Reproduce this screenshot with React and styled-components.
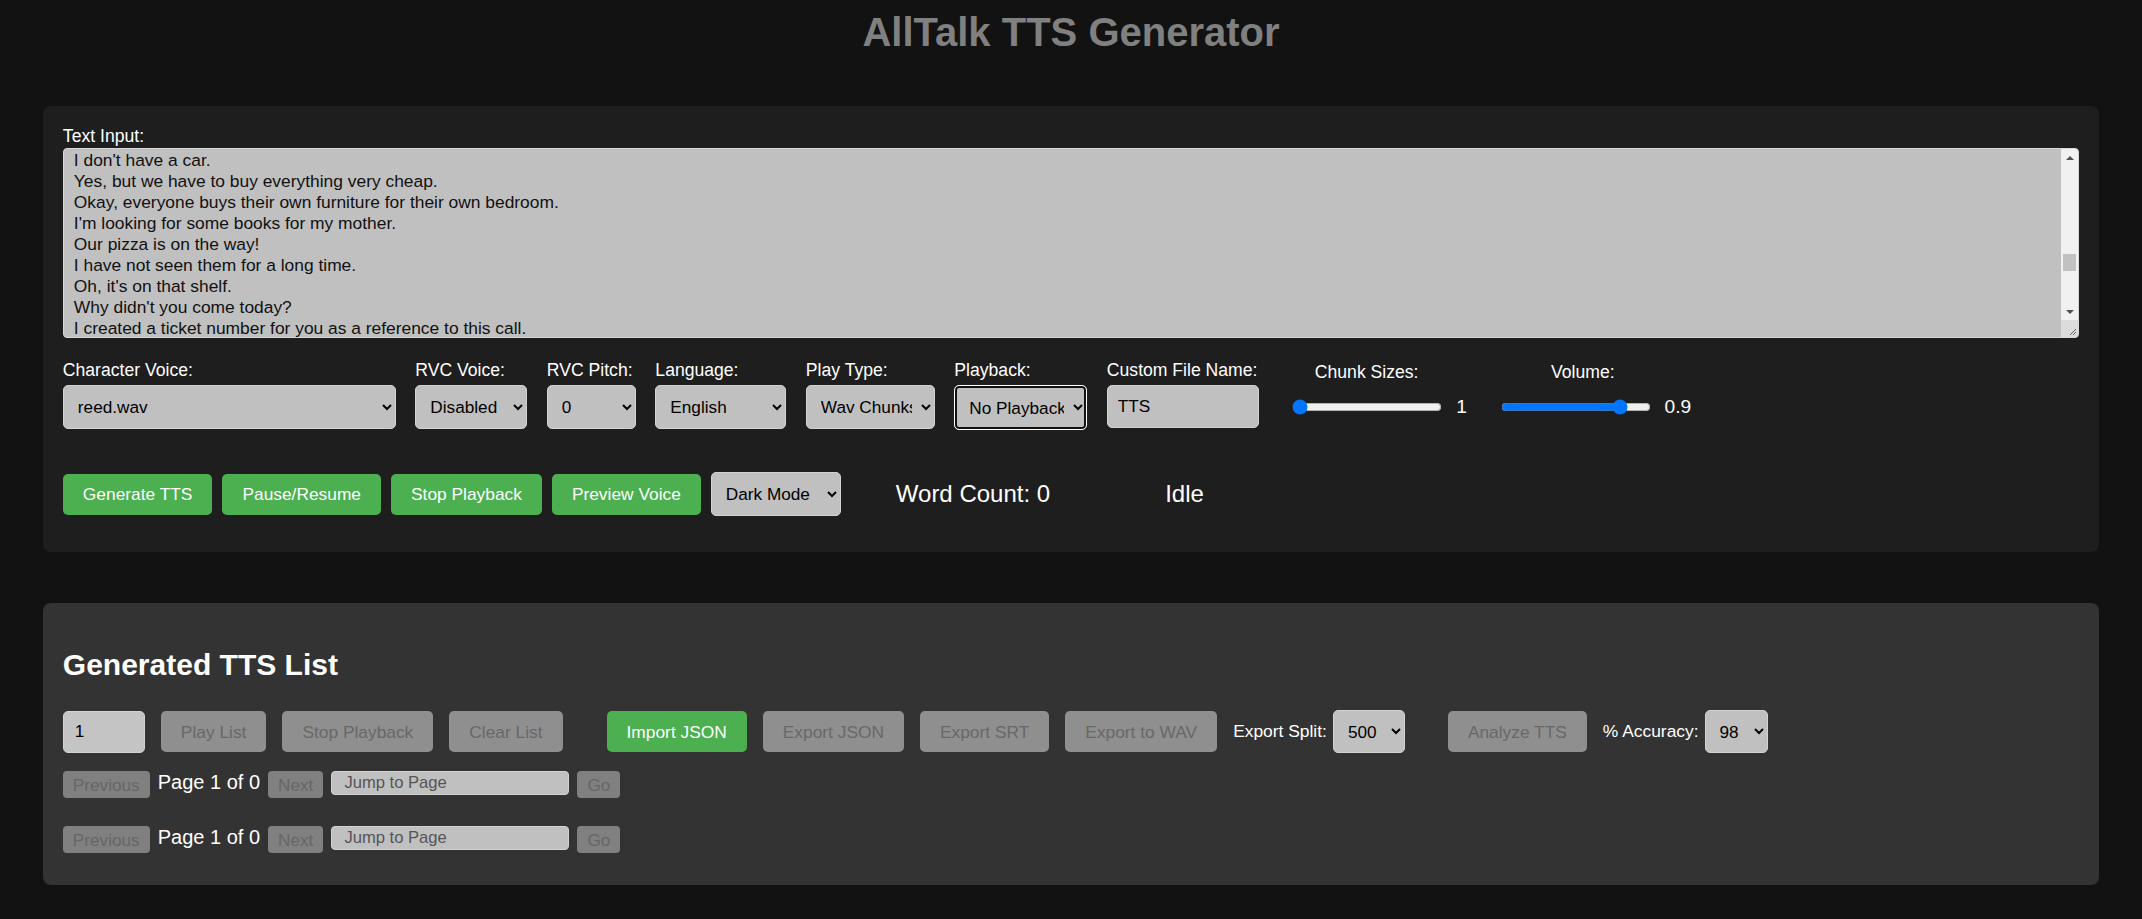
import styled, { createGlobalStyle, css } from "styled-components";

const GlobalStyle = createGlobalStyle`
  body {
    margin: 0;
    background-color: #121212;
    color: #fff;
    font-family: "Liberation Sans", Arial, sans-serif;
  }
`;

const Title = styled.h1`
  margin: 9px 0 51px;
  text-align: center;
  font-size: 40px;
  line-height: 46px;
  color: #808080;
`;

const Panel = styled.section`
  width: 96%;
  margin: 0 auto ${(p) => p.$gap || 0}px;
  box-sizing: border-box;
  padding: 20px 20px ${(p) => p.$padBottom}px;
  border-radius: 8px;
  background-color: ${(p) => p.$bg};
`;

const Label = styled.label`
  display: block;
  font-size: 17.6px;
  line-height: 20px;
  margin-bottom: ${(p) => p.$mb || 0}px;
  margin-top: ${(p) => p.$mt || 0}px;
  text-align: ${(p) => (p.$center ? "center" : "left")};
  padding-right: ${(p) => (p.$center ? 12 : 0)}px;
  white-space: nowrap;
`;

const TextAreaWrap = styled.div`
  position: relative;
  height: 190px;
`;

const TextArea = styled.textarea`
  display: block;
  width: 100%;
  height: 100%;
  box-sizing: border-box;
  padding: 1px 30px 0 10px;
  font-family: inherit;
  font-size: 17.4px;
  line-height: 21px;
  color: #111;
  background-color: #c0c0c0;
  border: 1px solid #d8d8d8;
  border-radius: 4px;
  resize: none;
  overflow: hidden;
  outline: none;
`;

const ScrollTrack = styled.div`
  position: absolute;
  top: 1px;
  right: 1px;
  bottom: 18px;
  width: 17px;
  background-color: #f1f1f1;
  display: flex;
  flex-direction: column;
  justify-content: space-between;
  align-items: center;
  border-top-right-radius: 3px;
`;

const ArrowBox = styled.div`
  width: 17px;
  height: 17px;
  display: flex;
  align-items: center;
  justify-content: center;
`;

const Arrow = styled.span`
  width: 0;
  height: 0;
  border-left: 4px solid transparent;
  border-right: 4px solid transparent;
  ${(p) =>
    p.$down
      ? css`border-top: 4px solid #505050;`
      : css`border-bottom: 4px solid #505050;`}
`;

const Thumb = styled.div`
  position: absolute;
  top: 105px;
  left: 2px;
  width: 13px;
  height: 17px;
  background-color: #c1c1c1;
`;

const Resizer = styled.div`
  position: absolute;
  right: 1px;
  bottom: 1px;
  width: 17px;
  height: 17px;
  background-color: #dcdcdc;
  border-bottom-right-radius: 3px;
`;

const ControlsRow = styled.div`
  display: flex;
  align-items: flex-start;
  gap: 19.5px;
  margin-top: 22px;
`;

const Field = styled.div`
  display: flex;
  flex-direction: column;
`;

const SliderField = styled.div`
  display: flex;
  flex-direction: column;
`;

const SliderRow = styled.div`
  display: flex;
  align-items: center;
  height: 44px;
  margin-top: 3px;
`;

const Range = styled.input`
  width: 150px;
  margin: 0 2px 0 14px;
`;

const RangeValue = styled.span`
  margin-left: 12px;
  font-size: 19.2px;
`;

const Select = styled.select`
  width: ${(p) => p.$w}px;
  height: ${(p) => p.$h || 44}px;
  box-sizing: border-box;
  padding: 0 6px 0 10px;
  font-family: inherit;
  font-size: ${(p) => p.$fs || 17.2}px;
  color: #000;
  background-color: #c0c0c0;
  border: 1px solid #d2d2d2;
  border-radius: 5px;
  outline: none;
  ${(p) =>
    p.$focused &&
    css`
      border: 1px solid #fff;
      box-shadow: inset 0 0 0 2px #111;
    `}
`;

const TextInput = styled.input`
  width: ${(p) => p.$w}px;
  height: ${(p) => p.$h}px;
  box-sizing: border-box;
  padding: 0 ${(p) => p.$px || 10}px;
  font-family: inherit;
  font-size: ${(p) => p.$fs || 17.2}px;
  color: #000;
  background-color: ${(p) => p.$bg || "#c0c0c0"};
  border: 1px solid #d2d2d2;
  border-radius: ${(p) => p.$radius || 5}px;
  outline: none;
  &::placeholder {
    color: #555;
  }
`;

const ActionRow = styled.div`
  display: flex;
  align-items: center;
  gap: 10px;
  margin-top: 42px;
`;

const Button = styled.button`
  font-family: inherit;
  font-size: 17.35px;
  line-height: 20px;
  padding: 10.5px 20px;
  margin-left: ${(p) => p.$ml || 0}px;
  border: none;
  border-radius: 5px;
  background-color: #4caf50;
  color: #fff;
  cursor: pointer;
  white-space: nowrap;
  &:disabled {
    background-color: #8f8f8f;
    color: #686868;
    cursor: default;
  }
`;

const Stat = styled.span`
  font-size: 24px;
  margin-left: ${(p) => p.$ml}px;
`;

const ListTitle = styled.h2`
  margin: 25px 0 28px;
  font-size: 30px;
  line-height: 34px;
`;

const ListControls = styled.div`
  display: flex;
  align-items: center;
  gap: 16px;
`;

const InlineField = styled.div`
  display: flex;
  align-items: center;
  gap: 6px;
  font-size: 17.4px;
`;

const Pagination = styled.div`
  display: flex;
  align-items: flex-start;
  gap: 8px;
  margin-top: ${(p) => p.$mt}px;
`;

const PageButton = styled.button`
  font-family: inherit;
  font-size: 17.2px;
  line-height: 20px;
  padding: 3.5px 10px;
  border: none;
  border-radius: 4px;
  background-color: #808080;
  color: #666;
  &:disabled {
    cursor: default;
  }
`;

const PageInfo = styled.span`
  font-size: 20px;
  line-height: 23px;
`;

const lines = [
  "I don't have a car.",
  "Yes, but we have to buy everything very cheap.",
  "Okay, everyone buys their own furniture for their own bedroom.",
  "I'm looking for some books for my mother.",
  "Our pizza is on the way!",
  "I have not seen them for a long time.",
  "Oh, it's on that shelf.",
  "Why didn't you come today?",
  "I created a ticket number for you as a reference to this call.",
];

const PageNav = ({ mt }) => (
  <Pagination $mt={mt}>
    <PageButton disabled>Previous</PageButton>
    <PageInfo>Page 1 of 0</PageInfo>
    <PageButton disabled>Next</PageButton>
    <TextInput $w={238} $h={24} $fs={16.6} $px={12} $radius={4} placeholder="Jump to Page" />
    <PageButton disabled>Go</PageButton>
  </Pagination>
);

const App = () => {
  return (
    <>
      <GlobalStyle />
      <Title>AllTalk TTS Generator</Title>

      <Panel $bg="#1e1e1e" $padBottom={36} $gap={51}>
        <Label htmlFor="text" $mb={2}>
          Text Input:
        </Label>
        <TextAreaWrap>
          <TextArea id="text" defaultValue={lines.join("\n")} />
          <ScrollTrack>
            <ArrowBox>
              <Arrow />
            </ArrowBox>
            <Thumb />
            <ArrowBox>
              <Arrow $down />
            </ArrowBox>
          </ScrollTrack>
          <Resizer>
            <svg width="17" height="17" viewBox="0 0 17 17">
              <path d="M15 9 L9 15 M15 12 L12 15" stroke="#666" strokeWidth="1" />
            </svg>
          </Resizer>
        </TextAreaWrap>

        <ControlsRow>
          <Field>
            <Label $mb={5}>Character Voice:</Label>
            <Select $w={333} defaultValue="reed.wav">
              <option>reed.wav</option>
            </Select>
          </Field>
          <Field>
            <Label $mb={5}>RVC Voice:</Label>
            <Select $w={112}>
              <option>Disabled</option>
            </Select>
          </Field>
          <Field>
            <Label $mb={5}>RVC Pitch:</Label>
            <Select $w={89}>
              <option>0</option>
            </Select>
          </Field>
          <Field>
            <Label $mb={5}>Language:</Label>
            <Select $w={131}>
              <option>English</option>
            </Select>
          </Field>
          <Field>
            <Label $mb={5}>Play Type:</Label>
            <Select $w={129}>
              <option>Wav Chunks</option>
            </Select>
          </Field>
          <Field>
            <Label $mb={5}>Playback:</Label>
            <Select $w={133} $h={45} $focused>
              <option>No Playback</option>
            </Select>
          </Field>
          <Field>
            <Label $mb={5}>Custom File Name:</Label>
            <TextInput $w={152} $h={43} defaultValue="TTS" />
          </Field>
          <SliderField>
            <Label $mt={2} $center>
              Chunk Sizes:
            </Label>
            <SliderRow>
              <Range type="range" min="1" max="20" step="1" defaultValue="1" />
              <RangeValue>1</RangeValue>
            </SliderRow>
          </SliderField>
          <SliderField>
            <Label $mt={2} $center>
              Volume:
            </Label>
            <SliderRow>
              <Range type="range" min="0" max="1.08" step="0.01" defaultValue="0.9" />
              <RangeValue>0.9</RangeValue>
            </SliderRow>
          </SliderField>
        </ControlsRow>

        <ActionRow>
          <Button>Generate TTS</Button>
          <Button>Pause/Resume</Button>
          <Button>Stop Playback</Button>
          <Button>Preview Voice</Button>
          <Select $w={130}>
            <option>Dark Mode</option>
          </Select>
          <Stat $ml={45}>Word Count: 0</Stat>
          <Stat $ml={105}>Idle</Stat>
        </ActionRow>
      </Panel>

      <Panel $bg="#333333" $padBottom={32}>
        <ListTitle>Generated TTS List</ListTitle>
        <ListControls>
          <TextInput $w={82} $h={42} $px={11} $bg="#c4c4c4" defaultValue="1" />
          <Button disabled>Play List</Button>
          <Button disabled>Stop Playback</Button>
          <Button disabled>Clear List</Button>
          <Button $ml={28}>Import JSON</Button>
          <Button disabled>Export JSON</Button>
          <Button disabled>Export SRT</Button>
          <Button disabled>Export to WAV</Button>
          <InlineField>
            Export Split:
            <Select $w={72} $h={43}>
              <option>500</option>
            </Select>
          </InlineField>
          <Button disabled $ml={27}>
            Analyze TTS
          </Button>
          <InlineField>
            % Accuracy:
            <Select $w={63} $h={43}>
              <option>98</option>
            </Select>
          </InlineField>
        </ListControls>
        <PageNav mt={18} />
        <PageNav mt={28} />
      </Panel>
    </>
  );
};

export default App;
